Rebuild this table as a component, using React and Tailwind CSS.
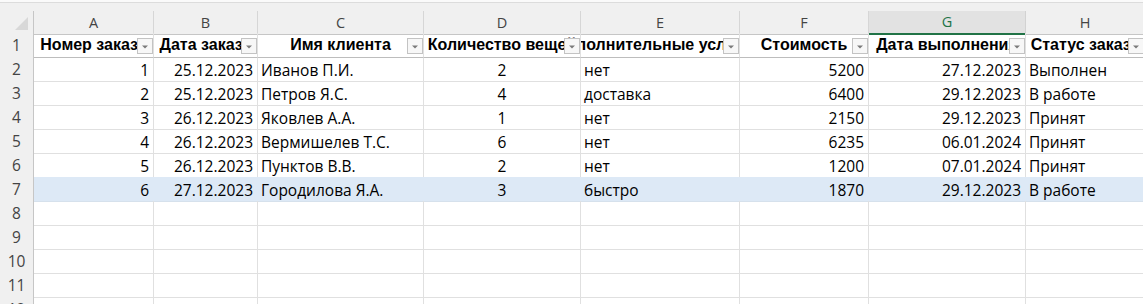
import React from "react";

const GRID =
  "grid grid-cols-[34px_120px_104px_166px_157px_159px_129px_157px_119px]";

const LETTERS = ["A", "B", "C", "D", "E", "F", "G", "H"];

const HEADERS = [
  "Номер заказа",
  "Дата заказа",
  "Имя клиента",
  "Количество вещей",
  "Дополнительные условия",
  "Стоимость",
  "Дата выполнения",
  "Статус заказа",
];

const ORDERS = [
  ["1", "25.12.2023", "Иванов П.И.", "2", "нет", "5200", "27.12.2023", "Выполнен"],
  ["2", "25.12.2023", "Петров Я.С.", "4", "доставка", "6400", "29.12.2023", "В работе"],
  ["3", "26.12.2023", "Яковлев А.А.", "1", "нет", "2150", "29.12.2023", "Принят"],
  ["4", "26.12.2023", "Вермишелев Т.С.", "6", "нет", "6235", "06.01.2024", "Принят"],
  ["5", "26.12.2023", "Пунктов В.В.", "2", "нет", "1200", "07.01.2024", "Принят"],
  ["6", "27.12.2023", "Городилова Я.А.", "3", "быстро", "1870", "29.12.2023", "В работе"],
];

// alignment per column: number cells right, count centered, text left
const ALIGN = [
  "justify-end pr-[4px]",
  "justify-end pr-[4px]",
  "justify-start pl-[3px]",
  "justify-center",
  "justify-start pl-[3px]",
  "justify-end pr-[4px]",
  "justify-end pr-[4px]",
  "justify-start pl-[3px]",
];

function FilterButton() {
  return (
    <div className="absolute right-0 top-[5px] w-[16px] h-[16px] border border-[#c3c3c3] bg-[#f7f7f7]">
      <svg width="14" height="14" viewBox="0 0 14 14" className="block">
        <polygon points="4,6.5 10,6.5 7,9.5" fill="#7a7a7a" />
      </svg>
    </div>
  );
}

function RowNumber({ n }) {
  return (
    <div className="flex items-center justify-center pt-[1px] bg-[#f0f0f0] border-r border-r-[#c6c6c6] border-b border-b-[#dadada] text-[#444444] text-[15.5px]">
      {n}
    </div>
  );
}

export default function App() {
  return (
    <div
      className="w-[1143px] h-[304px] overflow-hidden bg-white text-black"
      style={{ fontFamily: '"Open Sans", "Noto Sans", sans-serif' }}
    >
      {/* strip under the formula bar */}
      <div className="h-[11px] bg-white">
        <div className="h-[2px] bg-[#fafafa]" />
        <div className="h-[9px] bg-[#f0f0f0] border-t border-[#dcdcdc]" />
      </div>

      {/* column letters */}
      <div className={`${GRID} h-[22px]`}>
        <div className="flex items-end justify-end pr-[5px] pb-[4px] bg-[#f0f0f0] border-r border-r-[#c6c6c6] border-b border-b-[#c6c6c6]">
          <svg width="13" height="13" viewBox="0 0 13 13">
            <polygon points="13,0 13,13 0,13" fill="#d8d8d8" />
          </svg>
        </div>
        {LETTERS.map((l) =>
          l === "G" ? (
            <div
              key={l}
              className="flex items-center justify-center bg-[#e2e2e2] border-r border-r-[#d2d2d2] border-b-2 border-b-[#217346] text-[#217346] text-[14.5px]"
            >
              {l}
            </div>
          ) : (
            <div
              key={l}
              className="flex items-center justify-center bg-[#f0f0f0] border-r border-r-[#d6d6d6] border-b border-b-[#c6c6c6] text-[#444444] text-[14.5px]"
            >
              {l}
            </div>
          )
        )}
      </div>

      {/* table header row */}
      <div className={`${GRID} h-[24px]`}>
        <RowNumber n={1} />
        {HEADERS.map((h) => (
          <div
            key={h}
            className="relative overflow-hidden flex items-center justify-center border-r border-r-[#e0e0e0] border-b border-b-[#bdbdbd]"
          >
            <span
              className="whitespace-nowrap font-bold text-[16px] shrink-0"
              style={{ fontFamily: '"Liberation Sans", Arial, sans-serif' }}
            >
              {h}
            </span>
            <FilterButton />
          </div>
        ))}
      </div>

      {/* data rows */}
      {ORDERS.map((row, i) => {
        const active = i === ORDERS.length - 1;
        return (
          <div key={i} className={`${GRID} h-[24px]`}>
            <RowNumber n={i + 2} />
            {row.map((v, c) => (
              <div
                key={c}
                className={`flex items-center pt-[2px] overflow-hidden whitespace-nowrap text-[15.5px] border-r border-b ${
                  active
                    ? "bg-[#dde9f6] border-r-[#dde9f6] border-b-[#d6e1ec]"
                    : "border-r-[#e0e0e0] border-b-[#e0e0e0]"
                } ${ALIGN[c]}`}
              >
                {v}
              </div>
            ))}
          </div>
        );
      })}

      {/* empty rows */}
      {[8, 9, 10, 11, 12].map((n) => (
        <div key={n} className={`${GRID} h-[24px]`}>
          <RowNumber n={n} />
          {LETTERS.map((l) => (
            <div key={l} className="border-r border-r-[#e0e0e0] border-b border-b-[#e0e0e0]" />
          ))}
        </div>
      ))}
    </div>
  );
}
